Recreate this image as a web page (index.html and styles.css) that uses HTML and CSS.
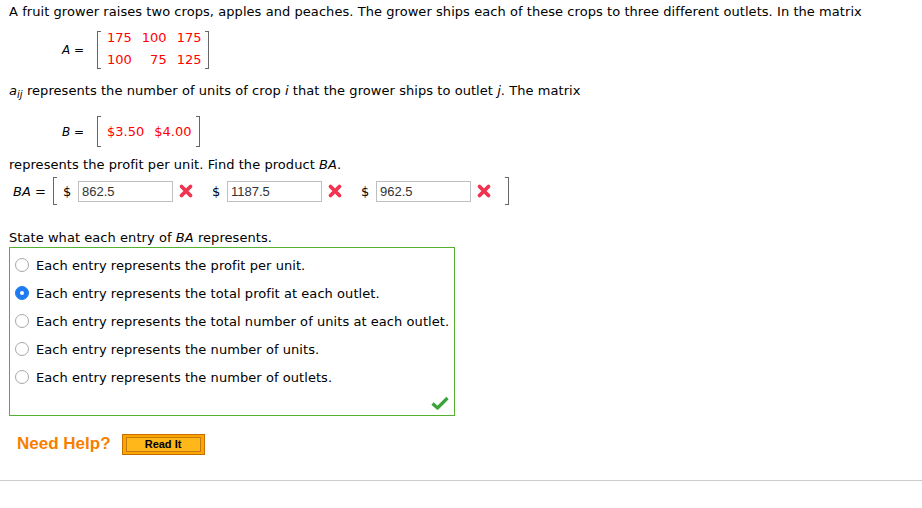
FILE: index.html
```html
<!DOCTYPE html>
<html>
<head>
<meta charset="utf-8">
<link rel="stylesheet" href="styles.css">
</head>
<body>
<div class="page">
  <p class="line first">A fruit grower raises two crops, apples and peaches. The grower ships each of these crops to three different outlets. In the matrix</p>

  <div class="eq eq-a">
    <span class="lhs"><i>A</i> =</span>
    <span class="br br-l"></span>
    <div class="mat mat-a">
      <span>175</span><span>100</span><span>175</span>
      <span>100</span><span>75</span><span>125</span>
    </div>
    <span class="br br-r"></span>
  </div>

  <p class="line aij"><i>a<sub>ij</sub></i> represents the number of units of crop <i>i</i> that the grower ships to outlet <i>j</i>. The matrix</p>

  <div class="eq eq-b">
    <span class="lhs"><i>B</i> =</span>
    <span class="br br-l"></span>
    <div class="mat mat-b">
      <span>$3.50</span><span>$4.00</span>
    </div>
    <span class="br br-r"></span>
  </div>

  <p class="line rep">represents the profit per unit. Find the product <i>BA</i>.</p>

  <div class="ba">
    <span class="lhs"><i>BA</i> =</span>
    <span class="br br-l"></span>
    <div class="cells">
      <div class="cell"><span class="dollar">$</span><span class="inp">862.5</span><svg class="x" viewBox="0 0 16 16"><path d="M3.5 3.5 L12.5 12.5 M12.5 3.5 L3.5 12.5" stroke="#f2334f" stroke-width="3.8" stroke-linecap="round"/></svg></div>
      <div class="cell"><span class="dollar">$</span><span class="inp">1187.5</span><svg class="x" viewBox="0 0 16 16"><path d="M3.5 3.5 L12.5 12.5 M12.5 3.5 L3.5 12.5" stroke="#f2334f" stroke-width="3.8" stroke-linecap="round"/></svg></div>
      <div class="cell"><span class="dollar">$</span><span class="inp">962.5</span><svg class="x" viewBox="0 0 16 16"><path d="M3.5 3.5 L12.5 12.5 M12.5 3.5 L3.5 12.5" stroke="#f2334f" stroke-width="3.8" stroke-linecap="round"/></svg></div>
    </div>
    <span class="br br-r"></span>
  </div>

  <p class="line state">State what each entry of <i>BA</i> represents.</p>

  <div class="choices">
    <div class="opt"><span class="radio"></span><span>Each entry represents the profit per unit.</span></div>
    <div class="opt"><span class="radio on"></span><span>Each entry represents the total profit at each outlet.</span></div>
    <div class="opt"><span class="radio"></span><span>Each entry represents the total number of units at each outlet.</span></div>
    <div class="opt"><span class="radio"></span><span>Each entry represents the number of units.</span></div>
    <div class="opt"><span class="radio"></span><span>Each entry represents the number of outlets.</span></div>
    <svg class="check" viewBox="0 0 18 14"><path d="M1.5 7.5 L6.5 12 L16.5 2" fill="none" stroke="#3aa33a" stroke-width="3.2" stroke-linejoin="round"/></svg>
  </div>

  <div class="help">
    <span class="need">Need Help?</span>
    <span class="btn"><span class="btn-in">Read It</span></span>
  </div>
</div>
<div class="rule"></div>
</body>
</html>
```

FILE: styles.css
```css
html, body {
  margin: 0;
  padding: 0;
  background: #fff;
}
body {
  font-family: "DejaVu Sans", Verdana, sans-serif;
  font-size: 13px;
  color: #000;
}
.page {
  padding: 0 9px;
}
.line {
  margin: 0;
  line-height: 16px;
  white-space: nowrap;
  letter-spacing: 0.06px;
}
.first { margin-top: 4px; }
.aij { margin-top: 14px; }
.rep { margin-top: 10px; }
.state { margin-top: 25px; }
sub {
  font-size: 10px;
  vertical-align: -3px;
  line-height: 0;
}
.eq {
  display: flex;
  align-items: stretch;
}
.eq .lhs {
  align-self: center;
  font-size: 12px;
  width: 35px;
  margin-left: 53px;
}
.eq-a { margin-top: 11px; height: 38px; }
.eq-b { margin-top: 17px; height: 31px; }
.br {
  display: block;
  width: 3px;
  border: 1px solid #666;
}
.br-l { border-right: none; }
.br-r { border-left: none; }
.mat {
  color: #f00;
  display: grid;
  line-height: 13px;
}
.mat-a {
  grid-template-columns: repeat(3, auto);
  column-gap: 10px;
  row-gap: 9px;
  padding: 0 4px 0 6px;
  justify-items: end;
  align-content: start;
}
.mat-a span:first-child,
.mat-a span:nth-child(4) { justify-self: start; }
.mat-b {
  grid-template-columns: auto auto;
  column-gap: 10px;
  padding: 0 5px 0 6px;
  align-content: center;
}
.ba {
  display: flex;
  align-items: stretch;
  margin-top: 4px;
  height: 28px;
}
.ba .lhs {
  align-self: center;
  margin-left: 4px;
  width: 40px;
}
.cells {
  display: flex;
  align-items: center;
  gap: 18px;
  padding: 0 13px 0 6px;
}
.cell {
  display: flex;
  align-items: center;
}
.dollar {
  width: 8px;
  margin-right: 7px;
}
.inp {
  box-sizing: border-box;
  width: 95px;
  height: 21px;
  border: 1px solid #bfbfbf;
  font-family: "Liberation Sans", Arial, sans-serif;
  font-size: 13px;
  color: #333;
  padding: 1px 3px;
  line-height: 17px;
}
.x {
  width: 16px;
  height: 16px;
  margin-left: 5px;
}
.choices {
  position: relative;
  margin-top: 1px;
  width: 444px;
  height: 164px;
  border: 1px solid #55b030;
  padding-top: 3px;
}
.opt {
  display: flex;
  align-items: center;
  height: 28px;
  padding-left: 5px;
  white-space: nowrap;
  letter-spacing: 0.06px;
}
.radio {
  box-sizing: border-box;
  width: 14px;
  height: 14px;
  border-radius: 50%;
  border: 1px solid #a8a8a8;
  background: #fff;
  margin-right: 7px;
  flex: none;
}
.radio.on {
  background: #1f7cf0;
  border-color: #1f7cf0;
  position: relative;
}
.radio.on::after {
  content: "";
  position: absolute;
  left: 4px;
  top: 4px;
  width: 4px;
  height: 4px;
  border-radius: 50%;
  background: #fff;
}
.check {
  position: absolute;
  right: 5px;
  bottom: 5px;
  width: 18px;
  height: 14px;
}
.help {
  display: flex;
  align-items: center;
  margin-top: 17px;
  padding-left: 8px;
  height: 22px;
}
.need {
  font-family: "Liberation Sans", Arial, sans-serif;
  font-weight: bold;
  font-size: 17px;
  color: #f77f00;
  margin-right: 11px;
}
.btn {
  box-sizing: border-box;
  width: 83px;
  height: 21px;
  border: 1px solid #c46f00;
  background: #ffa500;
  padding: 2px 3px;
  display: flex;
}
.btn-in {
  flex: 1;
  border: 1px solid #c47a10;
  background: #ffb71a;
  font-family: "Liberation Sans", Arial, sans-serif;
  font-weight: bold;
  font-size: 11px;
  text-align: center;
  line-height: 13px;
  color: #000;
}
.rule {
  margin-top: 25px;
  height: 1px;
  background: #cccccc;
}
```
